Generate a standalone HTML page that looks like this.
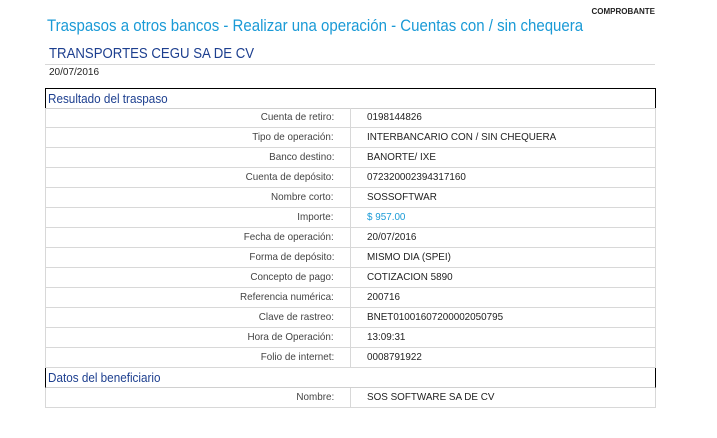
<!DOCTYPE html>
<html><head><meta charset="utf-8"><style>
body{margin:0;background:#fff;font-family:"Liberation Sans",Arial,sans-serif;width:717px;height:438px;overflow:hidden;position:relative}
.a{position:absolute}
.comp{right:62px;top:7px;font-size:8px;font-weight:bold;color:#222}
.t{left:47px;top:17px;font-size:16.5px;color:#1a9ad6;white-space:nowrap;transform:scaleX(0.91);transform-origin:0 0}
.co{left:49px;top:46px;font-size:14.5px;color:#1d3f8f;white-space:nowrap;transform:scaleX(0.91);transform-origin:0 0}
.ln{left:45px;top:64px;width:610px;height:1px;background:#d8d8d8}
.dt{left:49px;top:67px;font-size:10px;color:#222}
.h{position:absolute;left:45px;width:608px;height:19px;border-left:1px solid #000;border-right:1px solid #000;border-bottom:1px solid #d0d0d0;line-height:19px;padding-left:2px;box-sizing:content-box}
.h span{display:inline-block;font-size:13px;color:#1d3f8f;transform:scaleX(0.9);transform-origin:0 50%;white-space:nowrap}
.r{position:absolute;left:45px;width:609px;height:19px;border-left:1px solid #d8d8d8;border-right:1px solid #d8d8d8;border-bottom:1px solid #d8d8d8;font-size:10.5px;line-height:19px}
.r .l{position:absolute;left:0;width:305px;height:19px;border-right:1px solid #d8d8d8;text-align:right;color:#444;box-sizing:border-box;padding-right:16px}
.r .l span{display:inline-block;transform:scaleX(0.94);transform-origin:100% 50%;white-space:nowrap}
.r .v{position:absolute;left:321px;color:#222;transform:scaleX(0.94);transform-origin:0 50%;white-space:nowrap}
</style></head><body>
<div class="a comp">COMPROBANTE</div>
<div class="a t">Traspasos a otros bancos - Realizar una operación - Cuentas con / sin chequera</div>
<div class="a co">TRANSPORTES CEGU SA DE CV</div>
<div class="a ln"></div>
<div class="a dt">20/07/2016</div>
<div class="h" style="top:88px;border-top:1px solid #000;width:607px"><span>Resultado del traspaso</span></div>
<div class="r" style="top:108px"><div class="l"><span>Cuenta de retiro:</span></div><div class="v">0198144826</div></div>
<div class="r" style="top:128px"><div class="l"><span>Tipo de operación:</span></div><div class="v">INTERBANCARIO CON / SIN CHEQUERA</div></div>
<div class="r" style="top:148px"><div class="l"><span>Banco destino:</span></div><div class="v">BANORTE/ IXE</div></div>
<div class="r" style="top:168px"><div class="l"><span>Cuenta de depósito:</span></div><div class="v">072320002394317160</div></div>
<div class="r" style="top:188px"><div class="l"><span>Nombre corto:</span></div><div class="v">SOSSOFTWAR</div></div>
<div class="r" style="top:208px"><div class="l"><span>Importe:</span></div><div class="v" style="color:#1a9ad6">$ 957.00</div></div>
<div class="r" style="top:228px"><div class="l"><span>Fecha de operación:</span></div><div class="v">20/07/2016</div></div>
<div class="r" style="top:248px"><div class="l"><span>Forma de depósito:</span></div><div class="v">MISMO DIA (SPEI)</div></div>
<div class="r" style="top:268px"><div class="l"><span>Concepto de pago:</span></div><div class="v">COTIZACION 5890</div></div>
<div class="r" style="top:288px"><div class="l"><span>Referencia numérica:</span></div><div class="v">200716</div></div>
<div class="r" style="top:308px"><div class="l"><span>Clave de rastreo:</span></div><div class="v">BNET01001607200002050795</div></div>
<div class="r" style="top:328px"><div class="l"><span>Hora de Operación:</span></div><div class="v">13:09:31</div></div>
<div class="r" style="top:348px"><div class="l"><span>Folio de internet:</span></div><div class="v">0008791922</div></div>
<div class="h" style="top:368px;width:607px"><span>Datos del beneficiario</span></div>
<div class="r" style="top:388px"><div class="l"><span>Nombre:</span></div><div class="v">SOS SOFTWARE SA DE CV</div></div>
</body></html>
